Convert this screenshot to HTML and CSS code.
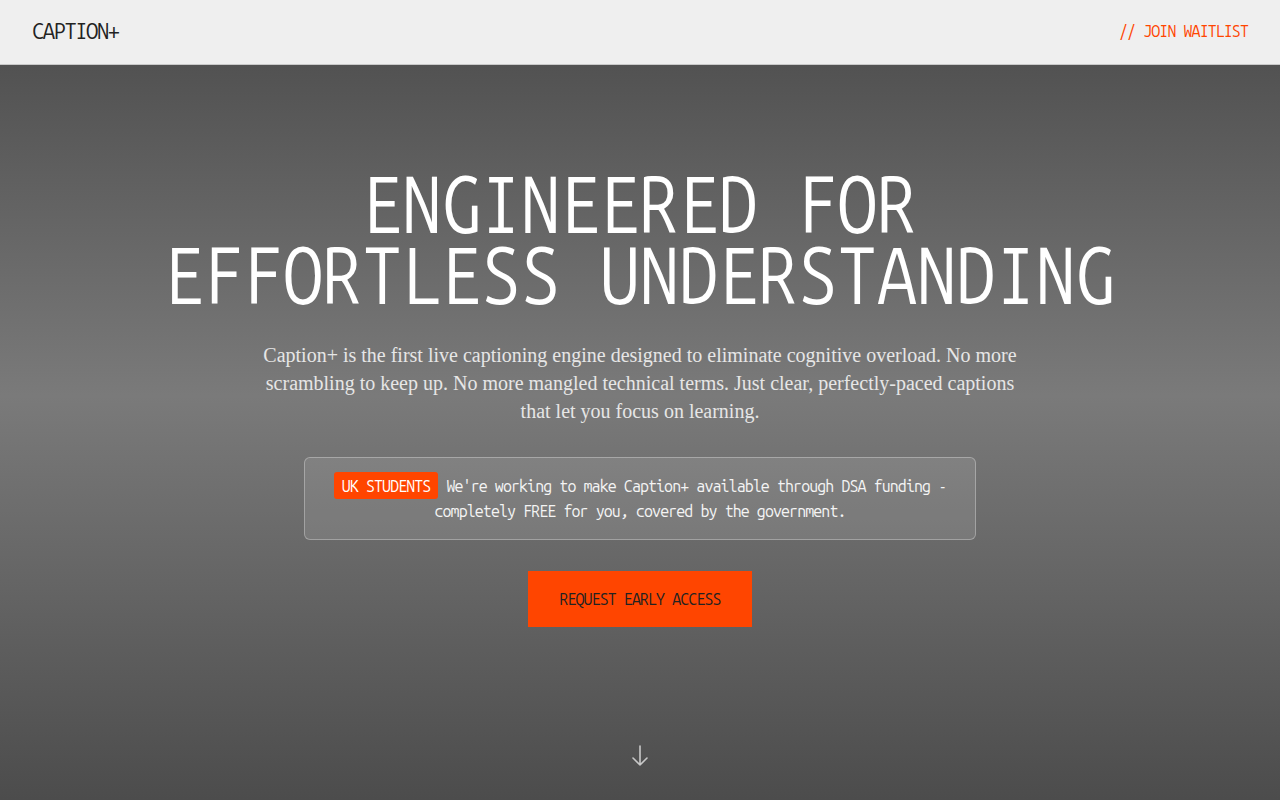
FILE: index.html
```html
<!DOCTYPE html>
<html lang="en">
<head>
<meta charset="utf-8">
<title>Caption+</title>
<link rel="stylesheet" href="styles.css">
</head>
<body>
<header class="nav">
  <div class="logo">CAPTION+</div>
  <a class="nav-link" href="#">// JOIN WAITLIST</a>
</header>
<main class="hero">
  <h1 class="title">ENGINEERED FOR<br>EFFORTLESS UNDERSTANDING</h1>
  <p class="lead">Caption+ is the first live captioning engine designed to eliminate cognitive overload. No more scrambling to keep up. No more mangled technical terms. Just clear, perfectly-paced captions that let you focus on learning.</p>
  <div class="notice"><span class="badge">UK STUDENTS</span> We're working to make Caption+ available through DSA funding - completely FREE for you, covered by the government.</div>
  <a class="cta" href="#">REQUEST EARLY ACCESS</a>
  <div class="scroll">
    <svg width="20" height="24" viewBox="0 0 20 24" fill="none" stroke="#c8c8c8" stroke-width="1.6" stroke-linecap="round" stroke-linejoin="round"><path d="M10 2v19M3 14l7 7 7-7"/></svg>
  </div>
</main>
</body>
</html>
```

FILE: styles.css
```css
* { box-sizing: border-box; }
html, body { margin: 0; padding: 0; }
body {
  font-family: "Ubuntu Mono", "DejaVu Sans Mono", monospace;
  background: #4d4d4d;
  height: 800px;
  overflow: hidden;
  display: flex;
  flex-direction: column;
}
.nav {
  height: 65px;
  flex: 0 0 65px;
  background: #efefef;
  border-bottom: 1px solid #c9c9c9;
  display: flex;
  align-items: center;
  justify-content: space-between;
  padding: 0 32px 3px;
}
.logo {
  font-size: 22px;
  letter-spacing: -1.5px;
  color: #222;
}
.nav-link {
  font-size: 16px;
  letter-spacing: -0.9px;
  color: #ff4500;
  text-decoration: none;
}
.hero {
  flex: 1;
  background: linear-gradient(180deg, #525252 0%, #7a7a7a 45%, #4c4c4c 100%);
  display: flex;
  flex-direction: column;
  align-items: center;
  padding-top: 103px;
  position: relative;
}
.title {
  margin: 0;
  font-weight: normal;
  color: #fff;
  font-size: 80px;
  line-height: 71px;
  text-align: center;
  white-space: nowrap;
  transform: scaleX(0.884);
}
.lead {
  font-family: "Liberation Serif", serif;
  font-size: 20px;
  line-height: 28px;
  color: #e6e6e6;
  text-align: center;
  max-width: 770px;
  margin: 31px 0 0;
}
.notice {
  margin-top: 32px;
  width: 672px;
  border: 1px solid rgba(255,255,255,0.3);
  border-radius: 6px;
  background: rgba(255,255,255,0.1);
  padding: 14px 24px 16px;
  color: #f4f4f4;
  font-size: 16px;
  letter-spacing: -0.9px;
  line-height: 24px;
  text-align: center;
}
.badge {
  display: inline-block;
  background: #ff4500;
  color: #fff;
  padding: 2px 8px 1px;
  border-radius: 3px;
  line-height: 24px;
}
.cta {
  margin-top: 31px;
  background: #ff4500;
  color: #222;
  text-decoration: none;
  font-size: 16px;
  letter-spacing: -0.9px;
  padding: 0 31px;
  height: 56px;
  display: flex;
  align-items: center;
}
.scroll {
  position: absolute;
  left: 50%;
  bottom: 32px;
  transform: translateX(-50%);
  width: 20px;
  height: 24px;
}
```
